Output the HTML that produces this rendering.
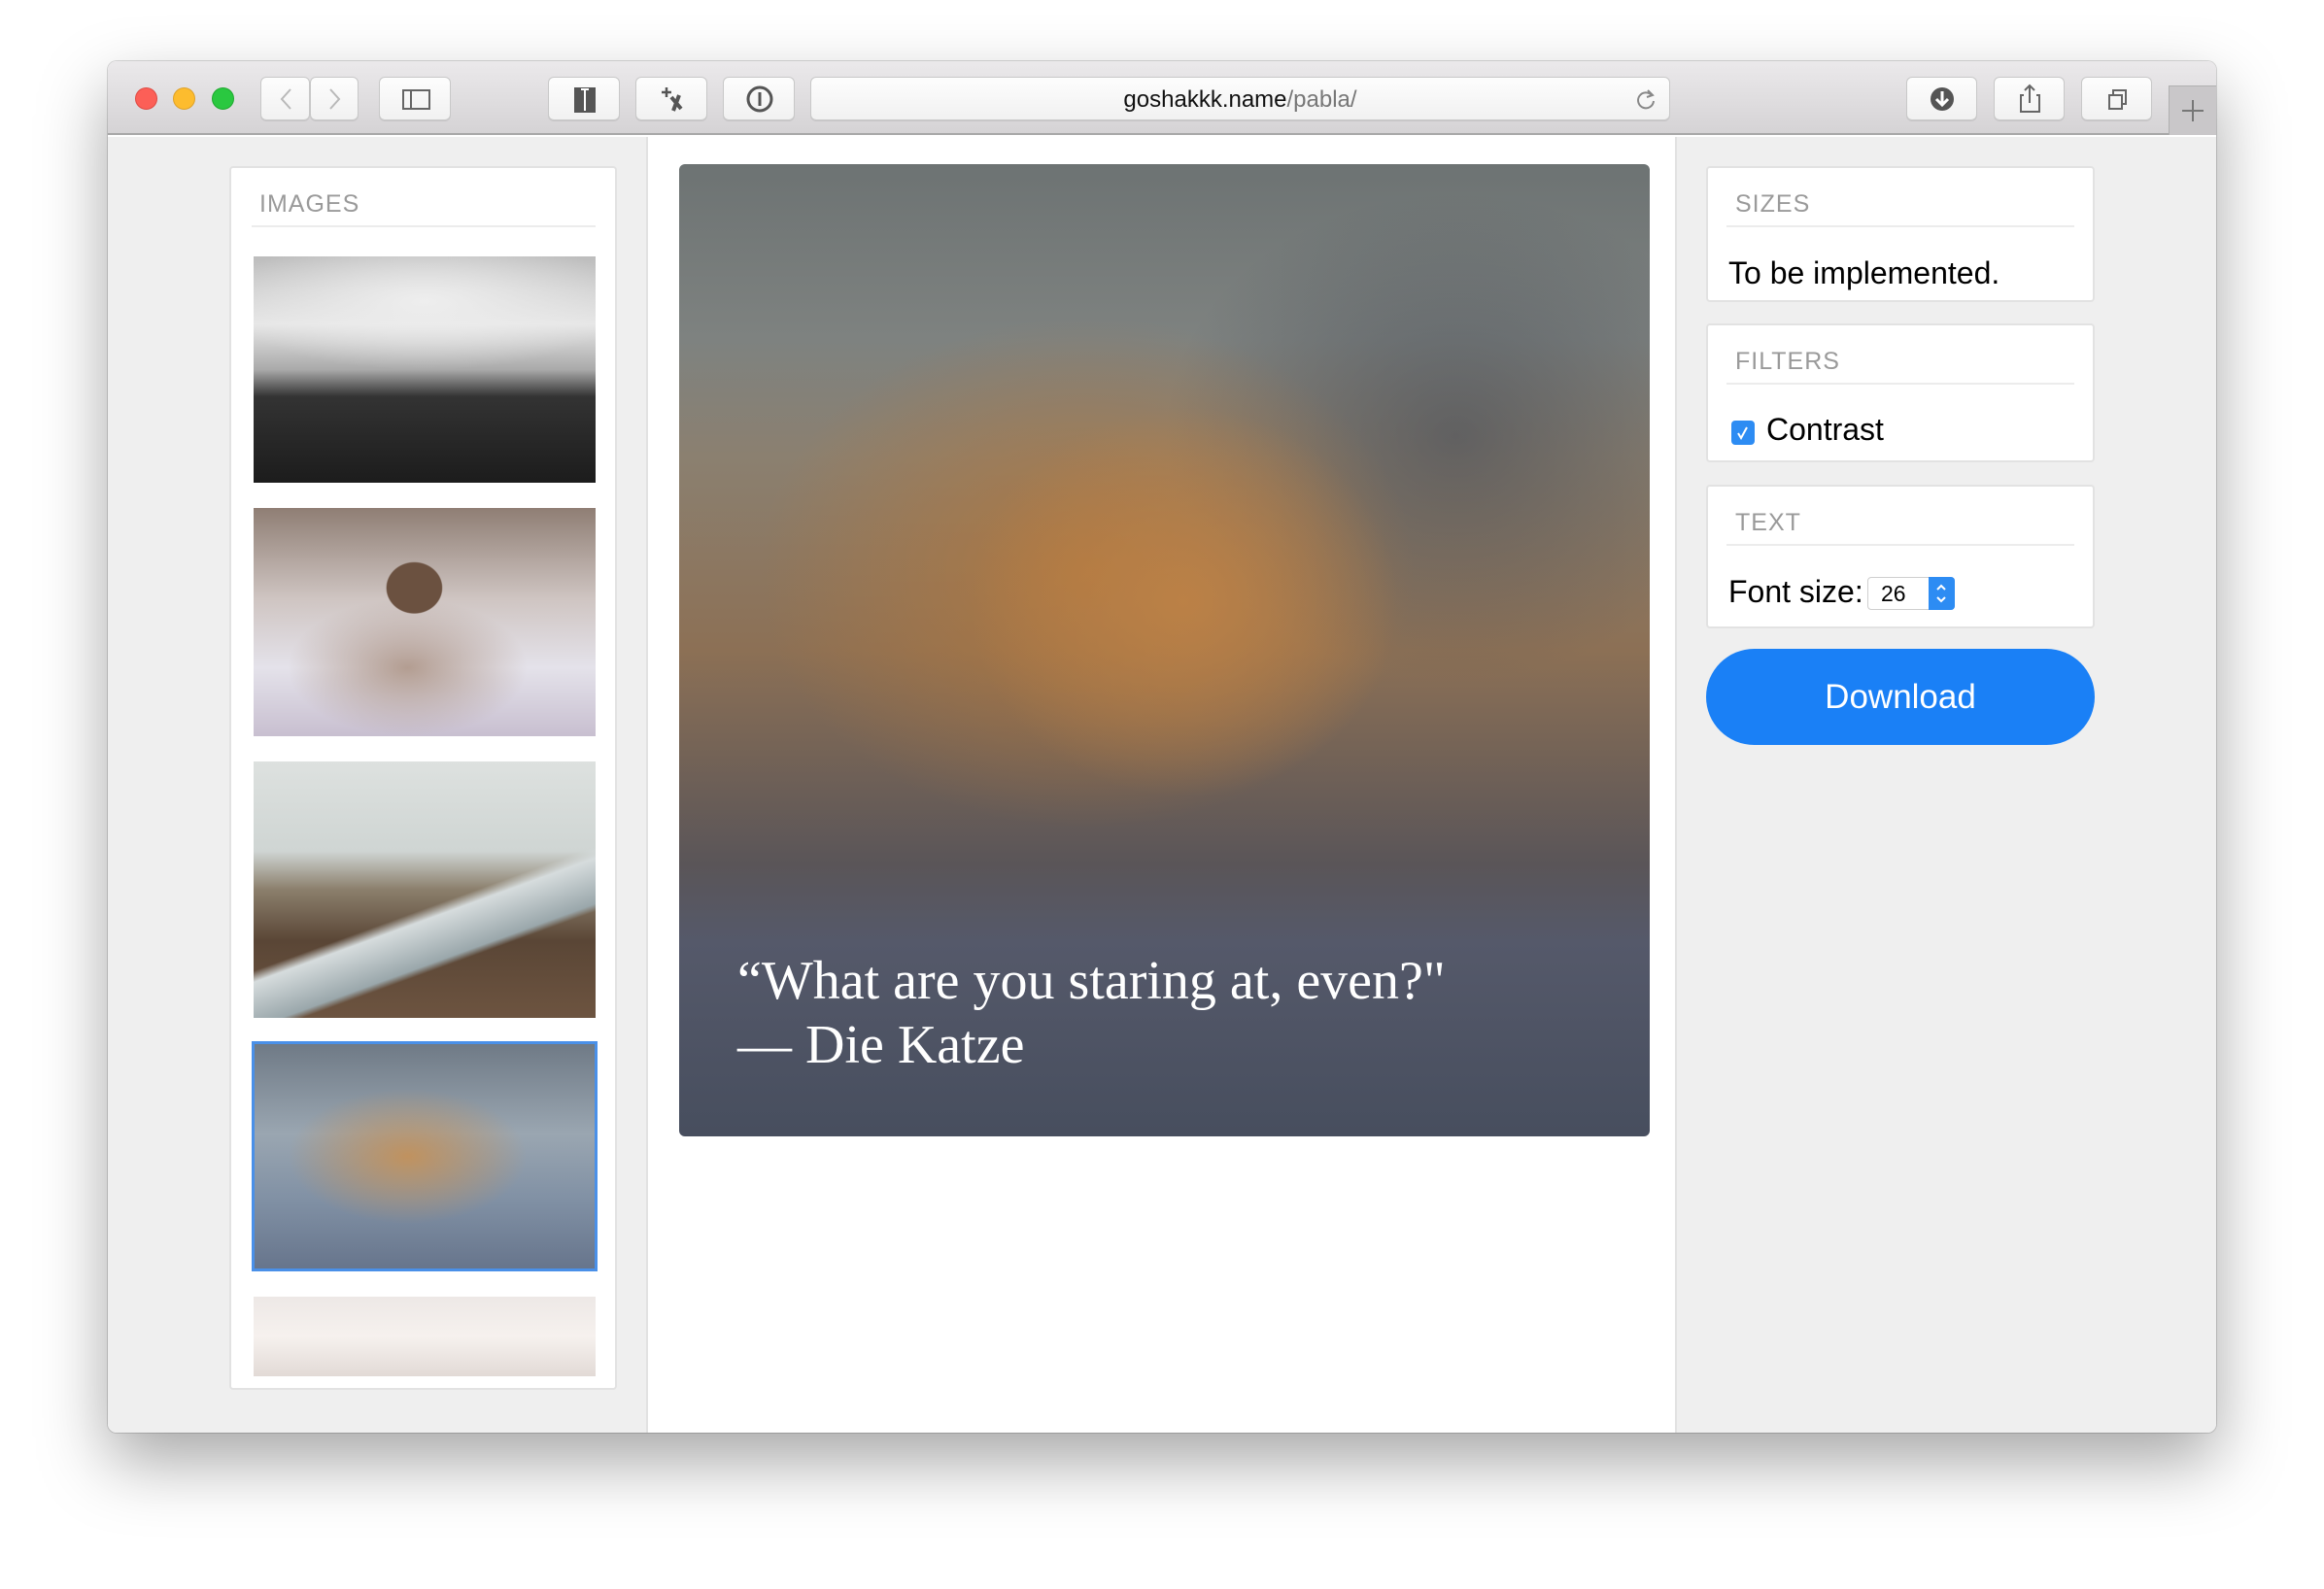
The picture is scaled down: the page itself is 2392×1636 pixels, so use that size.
<!DOCTYPE html>
<html><head><meta charset="utf-8"><style>
*{box-sizing:border-box;margin:0;padding:0}
body{width:2392px;height:1636px;background:#fff;position:relative;overflow:hidden;font-family:"Liberation Sans",sans-serif}
.a{position:absolute}
.win{left:111px;top:63px;width:2170px;height:1412px;border-radius:9px;overflow:hidden;box-shadow:0 30px 70px rgba(0,0,0,.35),0 0 0 1px rgba(0,0,0,.15)}
.tb{left:0;top:0;width:2170px;height:76px;background:linear-gradient(#ebe9eb,#d5d3d5);border-bottom:2px solid #a8a8a8}
.dot{width:23px;height:23px;border-radius:50%;top:27px}
.btn{top:16px;height:45px;background:linear-gradient(#fdfdfd,#f1f1f1);border:1px solid #c8c8c8;border-radius:6px;box-shadow:0 1px 0 rgba(0,0,0,.08)}
.card{background:#fff;border:2px solid #e2e2e2;border-radius:4px}
.h{color:#9a9a9a;font-size:25px;letter-spacing:1px}
.sep{height:2px;background:#ececec}
</style></head><body>
<div class="a win">
 <div class="a tb">
  <div class="a dot" style="left:28px;background:#fc5f57;border:1px solid #de4a43"></div>
  <div class="a dot" style="left:67px;background:#fdbc2e;border:1px solid #dea129"></div>
  <div class="a dot" style="left:107px;background:#2ac840;border:1px solid #1fa92f"></div>
  <div class="a btn" style="left:157px;width:51px"><svg width="51" height="45"><path d="M30 12 L21 22 L30 32" stroke="#b9b9b9" stroke-width="2" fill="none"/></svg></div>
  <div class="a btn" style="left:208px;width:50px"><svg width="50" height="45"><path d="M20 12 L29 22 L20 32" stroke="#b9b9b9" stroke-width="2" fill="none"/></svg></div>
  <div class="a btn" style="left:279px;width:74px"><svg width="74" height="45"><rect x="24" y="13" width="27" height="19" fill="none" stroke="#666" stroke-width="2"/><line x1="32" y1="13" x2="32" y2="32" stroke="#666" stroke-width="2"/></svg></div>
  <div class="a btn" style="left:453px;width:74px"><svg width="74" height="45"><rect x="26" y="10" width="22" height="26" fill="#555"/><path d="M33 12h8M37 12v22" stroke="#fff" stroke-width="2"/></svg></div>
  <div class="a btn" style="left:543px;width:74px"><svg width="74" height="45"><path d="M26 15h10M31 10v10" stroke="#555" stroke-width="2.5"/><path d="M36 20l10 12M44 18l-6 16" stroke="#555" stroke-width="4"/></svg></div>
  <div class="a btn" style="left:633px;width:74px"><svg width="74" height="45"><circle cx="37" cy="22" r="12" fill="none" stroke="#555" stroke-width="3"/><path d="M37 15v14" stroke="#555" stroke-width="3"/></svg></div>
  <div class="a btn" style="left:723px;width:885px;text-align:center;line-height:45px;font-size:24px;color:#111">goshakkk.name<span style="color:#777">/pabla/</span><svg class="a" style="right:12px;top:10px" width="24" height="24"><path d="M18 8 A8 8 0 1 0 20 14" stroke="#888" stroke-width="2" fill="none"/><path d="M14 3l5 5-6 2" stroke="#888" stroke-width="2" fill="none"/></svg></div>
  <div class="a btn" style="left:1851px;width:73px"><svg width="73" height="45"><circle cx="36" cy="22" r="12" fill="#555"/><path d="M36 14v13M30 22l6 6 6-6" stroke="#fff" stroke-width="3" fill="none"/></svg></div>
  <div class="a btn" style="left:1941px;width:73px"><svg width="73" height="45"><path d="M30 18h-3v17h19V18h-3M36 8v18M31 13l5-5 5 5" stroke="#666" stroke-width="2" fill="none"/></svg></div>
  <div class="a btn" style="left:2031px;width:73px"><svg width="73" height="45"><rect x="28" y="18" width="13" height="14" fill="none" stroke="#666" stroke-width="2"/><path d="M32 18v-5h13v14h-4" stroke="#666" stroke-width="2" fill="none"/></svg></div>
  <div class="a" style="left:2121px;top:25px;width:49px;height:51px;background:#c9c7c9;border-left:1px solid #b0b0b0;border-top:1px solid #b0b0b0"><svg width="49" height="51"><path d="M24 14v22M13 25h22" stroke="#777" stroke-width="2"/></svg></div>
 </div>
 <div class="a" style="left:0;top:78px;width:556px;height:1334px;background:#efefef;border-right:2px solid #e2e2e2"></div>
 <div class="a" style="left:556px;top:78px;width:1057px;height:1334px;background:#fff"></div>
 <div class="a" style="left:1613px;top:78px;width:557px;height:1334px;background:#efefef;border-left:2px solid #e2e2e2"></div>
</div>

<div class="a card" style="left:236px;top:171px;width:399px;height:1260px"></div>
<div class="a h" style="left:267px;top:196px">IMAGES</div>
<div class="a sep" style="left:259px;top:232px;width:354px"></div>
<div class="a" style="left:261px;top:264px;width:352px;height:233px;background:radial-gradient(ellipse 60% 30% at 50% 20%,#eee,transparent),linear-gradient(#bcbcbc 0%,#e6e6e6 30%,#aaa 50%,#333 62%,#1c1c1c 100%)"></div>
<div class="a" style="left:261px;top:523px;width:352px;height:235px;background:radial-gradient(ellipse 16% 22% at 47% 35%,#6b5140 50%,transparent 52%),radial-gradient(ellipse 35% 30% at 45% 70%,#b39d91,transparent),linear-gradient(#8f7e74,#cfc5c2 40%,#e4e2ea 70%,#c8bfd0)"></div>
<div class="a" style="left:261px;top:784px;width:352px;height:264px;background:linear-gradient(160deg,transparent 55%,#d6dcdd 58%,#9aa7ab 70%,transparent 72%),linear-gradient(#dde1df 0%,#cfd5d3 35%,#8b7f6c 50%,#5a4636 70%,#6d5440 100%)"></div>
<div class="a" style="left:259px;top:1072px;width:356px;height:237px;border:3px solid #4a90e8;background:radial-gradient(ellipse 35% 30% at 45% 50%,#c0925f,transparent),linear-gradient(#6f7a86,#9aa6b1 40%,#8090a4 70%,#67758c)"></div>
<div class="a" style="left:261px;top:1335px;width:352px;height:82px;background:linear-gradient(#ede8e6,#f6f1ee 50%,#e2dad6)"></div>

<div class="a" style="left:699px;top:169px;width:999px;height:1001px;border-radius:6px;overflow:hidden;background:radial-gradient(ellipse 22% 20% at 52% 45%,rgba(190,130,70,.9),transparent),radial-gradient(ellipse 45% 35% at 42% 42%,rgba(180,120,60,.85),transparent 75%),radial-gradient(ellipse 30% 25% at 80% 28%,rgba(70,75,85,.6),transparent),linear-gradient(#6d7373 0%,#7e8280 18%,#8b8070 30%,#8c7055 50%,#5a5558 72%,#55596a 80%,#474e5e 100%)">
 <div class="a" style="left:60px;top:808px;color:#fff;font-family:'Liberation Serif',serif;font-size:56px;line-height:66px">“What are you staring at, even?"<br>— Die Katze</div>
</div>

<div class="a card" style="left:1756px;top:171px;width:400px;height:140px"></div>
<div class="a h" style="left:1786px;top:196px">SIZES</div>
<div class="a sep" style="left:1777px;top:232px;width:358px"></div>
<div class="a" style="left:1779px;top:263px;font-size:32px;color:#000">To be implemented.</div>

<div class="a card" style="left:1756px;top:333px;width:400px;height:143px"></div>
<div class="a h" style="left:1786px;top:358px">FILTERS</div>
<div class="a sep" style="left:1777px;top:394px;width:358px"></div>
<div class="a" style="left:1782px;top:433px;width:24px;height:25px;background:#2d8cf3;border-radius:4px"><svg width="24" height="25"><path d="M7 13l3 5 6-11" stroke="#fff" stroke-width="2" fill="none"/></svg></div>
<div class="a" style="left:1818px;top:424px;font-size:32px;color:#000">Contrast</div>

<div class="a card" style="left:1756px;top:499px;width:400px;height:148px"></div>
<div class="a h" style="left:1786px;top:524px">TEXT</div>
<div class="a sep" style="left:1777px;top:560px;width:358px"></div>
<div class="a" style="left:1779px;top:591px;font-size:32px;color:#000">Font size:</div>
<div class="a" style="left:1922px;top:594px;width:90px;height:34px;border:1px solid #cfcfcf;border-radius:4px;background:#fff;font-size:23px;line-height:32px;padding-left:13px">26</div>
<div class="a" style="left:1985px;top:594px;width:27px;height:34px;background:#2d8cf3;border-radius:0 4px 4px 0"><svg width="27" height="34"><path d="M9 13l4-4 4 4M9 21l4 4 4-4" stroke="#fff" stroke-width="2" fill="none"/></svg></div>

<div class="a" style="left:1756px;top:668px;width:400px;height:99px;border-radius:50px;background:#1a80f6;color:#fff;font-size:35px;text-align:center;line-height:99px">Download</div>
</body></html>
